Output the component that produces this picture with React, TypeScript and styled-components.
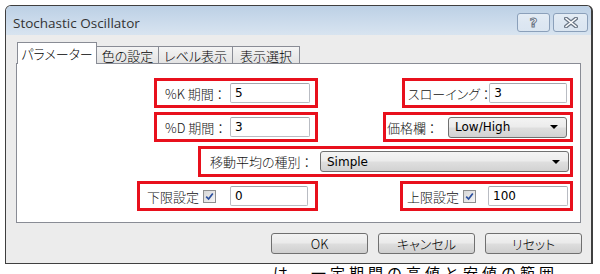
import React from 'react';
import styled, { createGlobalStyle } from 'styled-components';

const GlobalStyle = createGlobalStyle`
  html, body {
    margin: 0;
    padding: 0;
    background: #fff;
  }
  body {
    font-family: "Noto Sans CJK JP", "Noto Sans", sans-serif;
    font-size: 13px;
    font-weight: 300;
    color: #000;
  }
`;

const Page = styled.div`
  width: 600px;
  height: 274px;
  overflow: hidden;
  padding: 5px 0 0 5px;
  box-sizing: border-box;
`;

const Window = styled.div`
  width: 588px;
  height: 259px;
  box-sizing: border-box;
  border: 1px solid #3f3f3f;
  border-right-width: 2px;
  border-radius: 6px 6px 0 0;
  background: #ececec;
  display: flex;
  flex-direction: column;
`;

const TitleBar = styled.div`
  height: 29px;
  flex: none;
  display: flex;
  align-items: center;
  padding: 4px 3px 0 7px;
  box-sizing: border-box;
  border-radius: 5px 5px 0 0;
  background: linear-gradient(#bcd0e5, #cddcec 60%, #d8e4f0);
`;

const Title = styled.div`
  flex: 1;
  font-family: "Open Sans", "Noto Sans", sans-serif;
  font-weight: 400;
  font-size: 13.5px;
  color: #333;
`;

const CaptionButton = styled.div<{ $w: number }>`
  width: ${(p) => p.$w}px;
  height: 19px;
  box-sizing: border-box;
  margin-left: 3px;
  border: 1px solid #8ba0ba;
  border-radius: 3px;
  background: linear-gradient(rgba(255, 255, 255, 0.55), rgba(255, 255, 255, 0.15));
  display: flex;
  align-items: center;
  justify-content: center;
  font-family: "DejaVu Sans", sans-serif;
  font-weight: bold;
  font-size: 13px;
  color: #fff;
  -webkit-text-stroke: 1px #6a7686;
`;

const Body = styled.div`
  flex: 1;
  padding: 7px 10px 0 10px;
  display: flex;
  flex-direction: column;
`;

const TabRow = styled.div`
  display: flex;
  align-items: flex-end;
  height: 21px;
  padding-left: 1px;
`;

const Tab = styled.div<{ $active?: boolean; $w: number }>`
  position: relative;
  z-index: ${(p) => (p.$active ? 2 : 1)};
  width: ${(p) => p.$w}px;
  height: ${(p) => (p.$active ? 22 : 18)}px;
  margin-bottom: -1px;
  margin-left: ${(p) => (p.$active ? 0 : -1)}px;
  box-sizing: border-box;
  border: 1px solid #898c95;
  border-bottom: ${(p) => (p.$active ? 'none' : '1px solid #898c95')};
  background: ${(p) => (p.$active ? '#fff' : 'linear-gradient(#f4f4f4, #e3e3e3)')};
  display: flex;
  align-items: center;
  justify-content: center;
  font-size: 13px;
  line-height: 1;
  font-feature-settings: "palt";
  padding-top: ${(p) => (p.$active ? 0 : 1)}px;
`;

const Panel = styled.div`
  height: 160px;
  box-sizing: border-box;
  border: 1px solid #898c95;
  background: #fff;
  padding: 14px 7px 0 0;
  display: grid;
  grid-template-columns: 301px 255px;
  grid-template-rows: 30px 30px 31px 30px;
  row-gap: 4px;
`;

const Annot = styled.div<{ $w: number; $pl: number; $pr: number; $span?: boolean }>`
  grid-column: ${(p) => (p.$span ? '1 / 3' : 'auto')};
  justify-self: end;
  width: ${(p) => p.$w}px;
  height: 100%;
  box-sizing: border-box;
  border: 3px solid #e8101c;
  padding: 0 ${(p) => p.$pr}px 0 ${(p) => p.$pl}px;
  display: flex;
  align-items: center;
`;

const Label = styled.span`
  font-size: 13px;
  white-space: nowrap;
  font-feature-settings: "palt";
  color: #111;
`;

const TextField = styled.div<{ $w: number }>`
  margin-left: auto;
  width: ${(p) => p.$w}px;
  height: 20px;
  box-sizing: border-box;
  border: 1px solid #b9bcc3;
  border-top-color: #a3a6ad;
  border-radius: 2px;
  background: #fff;
  padding: 0 4px;
  display: flex;
  align-items: center;
  font-family: "DejaVu Sans", sans-serif;
  font-weight: 400;
  font-size: 12px;
`;

const Select = styled.div<{ $w: number }>`
  margin-left: auto;
  width: ${(p) => p.$w}px;
  height: 21px;
  box-sizing: border-box;
  border: 1px solid #707070;
  border-radius: 3px;
  background: linear-gradient(#f4f4f4, #ececec 45%, #dedede 55%, #d2d2d2);
  padding: 0 8px 0 6px;
  display: flex;
  align-items: center;
  justify-content: space-between;
  font-family: "DejaVu Sans", sans-serif;
  font-weight: 400;
  font-size: 12px;
`;

const Check = styled.div`
  width: 13px;
  height: 13px;
  margin-left: 4px;
  box-sizing: border-box;
  border: 1px solid #8e8f8f;
  background: linear-gradient(135deg, #d6d6d6, #f6f6f6);
  display: flex;
  align-items: center;
  justify-content: center;
`;

const ButtonRow = styled.div`
  display: flex;
  justify-content: flex-end;
  gap: 10px;
  margin-top: 10px;
  margin-right: -1px;
`;

const Button = styled.div`
  width: 97px;
  height: 21px;
  box-sizing: border-box;
  border: 1px solid #707070;
  border-radius: 3px;
  background: linear-gradient(#f3f3f3, #ebebeb 45%, #dddddd 55%, #cfcfcf);
  display: flex;
  align-items: center;
  justify-content: center;
  font-size: 13px;
  font-feature-settings: "palt";
`;

const Below = styled.div`
  height: 10px;
  overflow: hidden;
  padding-left: 268px;
  font-size: 15px;
  font-weight: 400;
  line-height: 18px;
  letter-spacing: 4px;
  white-space: nowrap;
`;

const Arrow = () => (
  <svg width="8" height="4" viewBox="0 0 8 4">
    <path d="M0 0 H8 L4 4 Z" fill="#000" />
  </svg>
);

const Tick = () => (
  <svg width="9" height="9" viewBox="0 0 9 9">
    <path d="M1.2 4.6 L3.6 7 L7.8 1.4" fill="none" stroke="#2b4f9e" strokeWidth="1.7" />
  </svg>
);

const CloseGlyph = () => (
  <svg width="14" height="11" viewBox="0 0 14 11">
    <path d="M2 1.5 L12 9.5 M12 1.5 L2 9.5" stroke="#6a7686" strokeWidth="4" strokeLinecap="round" />
    <path d="M2 1.5 L12 9.5 M12 1.5 L2 9.5" stroke="#fff" strokeWidth="1.6" strokeLinecap="round" />
  </svg>
);

const App: React.FC = () => {
  return (
    <Page>
      <GlobalStyle />
      <Window>
        <TitleBar>
          <Title>Stochastic Oscillator</Title>
          <CaptionButton $w={33}>?</CaptionButton>
          <CaptionButton $w={35}>
            <CloseGlyph />
          </CaptionButton>
        </TitleBar>
        <Body>
          <TabRow>
            <Tab $active $w={80}>パラメーター</Tab>
            <Tab $w={63}>色の設定</Tab>
            <Tab $w={75}>レベル表示</Tab>
            <Tab $w={68}>表示選択</Tab>
          </TabRow>
          <Panel>
            <Annot $w={164} $pl={8} $pr={5}>
              <Label>%K 期間 ：</Label>
              <TextField $w={80}>5</TextField>
            </Annot>
            <Annot $w={171} $pl={3} $pr={3}>
              <Label>スローイング ：</Label>
              <TextField $w={79}>3</TextField>
            </Annot>
            <Annot $w={164} $pl={8} $pr={5}>
              <Label>%D 期間 ：</Label>
              <TextField $w={80}>3</TextField>
            </Annot>
            <Annot $w={190} $pl={1} $pr={3}>
              <Label>価格欄 ：</Label>
              <Select $w={119}>
                Low/High
                <Arrow />
              </Select>
            </Annot>
            <Annot $span $w={375} $pl={9} $pr={1}>
              <Label>移動平均の種別 ：</Label>
              <Select $w={249}>
                Simple
                <Arrow />
              </Select>
            </Annot>
            <Annot $w={181} $pl={7} $pr={7}>
              <Label>下限設定</Label>
              <Check>
                <Tick />
              </Check>
              <TextField $w={78}>0</TextField>
            </Annot>
            <Annot $w={173} $pl={4} $pr={2}>
              <Label>上限設定</Label>
              <Check>
                <Tick />
              </Check>
              <TextField $w={80}>100</TextField>
            </Annot>
          </Panel>
          <ButtonRow>
            <Button>OK</Button>
            <Button>キャンセル</Button>
            <Button>リセット</Button>
          </ButtonRow>
        </Body>
      </Window>
      <Below>は、一定期間の高値と安値の範囲</Below>
    </Page>
  );
};

export default App;
